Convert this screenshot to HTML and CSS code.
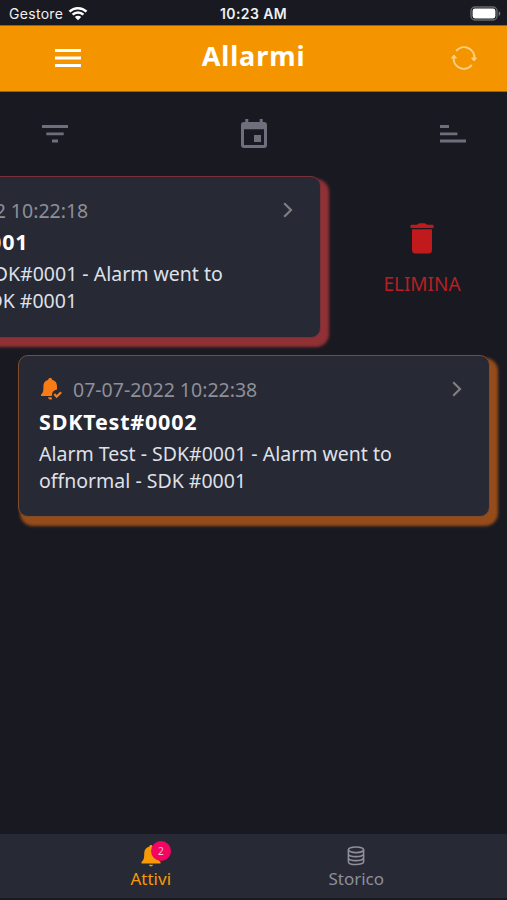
FILE: index.html
```
<!DOCTYPE html>
<html lang="it">
<head>
  <meta charset="UTF-8">
  <meta name="viewport" content="width=device-width, initial-scale=1.0">
  <title>Allarmi</title>
  <link rel="stylesheet" href="styles.css">
</head>
<body>
  <div class="status-bar">
    <div class="carrier">
      <span>Gestore</span>
      <svg class="wifi" width="20" height="15" viewBox="0 0 20 15">
        <path d="M1.5 5.6C6.2 1 13.8 1 18.5 5.6M4.6 8.7c3-2.9 7.8-2.9 10.8 0" fill="none" stroke="#fff" stroke-width="2.5"/>
        <path d="M10 14.2l-3.2-3.3c1.8-1.7 4.6-1.7 6.4 0z" fill="#fff"/>
      </svg>
    </div>
    <span class="clock">10:23 AM</span>
    <svg class="battery" width="31" height="15" viewBox="0 0 31 15">
      <rect x="1" y="1" width="26" height="13" rx="4" fill="#1a1b22" stroke="#66676c" stroke-width="1.4"/>
      <rect x="2.6" y="2.6" width="22.8" height="9.8" rx="2.4" fill="#fff"/>
      <path d="M28.7 5.2c2.2.9 2.2 3.7 0 4.6z" fill="#77787c"/>
    </svg>
  </div>

  <header class="header">
    <svg class="menu-icon" width="26" height="18" viewBox="0 0 26 18">
      <path d="M0 1.5h26M0 9h26M0 16.5h26" stroke="#fff" stroke-width="2.9"/>
    </svg>
    <h1>Allarmi</h1>
    <svg class="refresh-icon" width="28" height="24" viewBox="0 0 28 24">
      <g fill="none" stroke="#fbcf83" stroke-width="2">
        <path d="M6.2 5A10.2 10.2 0 0 1 24.2 13"/>
        <path d="M21.8 19A10.2 10.2 0 0 1 3.8 11"/>
      </g>
      <path d="M21.5 12h5L24 15zM1.5 12h5L4 9z" fill="#fbcf83" stroke="#fbcf83" stroke-linejoin="round"/>
    </svg>
  </header>

  <div class="toolbar">
    <svg width="26" height="18" viewBox="0 0 26 18">
      <path d="M0 1.5h26M4.3 8.8h17.4M10 16h6" stroke="#6d6f7c" stroke-width="2.8"/>
    </svg>
    <svg width="26" height="30" viewBox="0 0 26 30">
      <path fill-rule="evenodd" d="M4.3 0h3v3h11.4V0h3v3H23a3 3 0 0 1 3 3v20a3 3 0 0 1-3 3H3a3 3 0 0 1-3-3V6a3 3 0 0 1 3-3h1.3zM3 10.3V26h20V10.3z" fill="#6d6f7c"/>
      <rect x="13" y="16" width="7" height="7" fill="#6d6f7c"/>
    </svg>
    <svg width="26" height="18" viewBox="0 0 26 18">
      <path d="M0 1.5h9M0 8.8h17.4M0 16h26" stroke="#6d6f7c" stroke-width="2.8"/>
    </svg>
  </div>

  <main class="alarms">
    <div class="alarm-row swiped">
      <div class="alarm-card red">
        <div class="alarm-top">
          <svg class="alarm-bell" width="22" height="22" viewBox="0 0 22 22">
            <path d="M10 0c1 0 1.6.7 1.6 1.5C15 2.3 16.5 5 16.5 8v3c-3.5.5-5.5 3-5.3 7H1v-1.5c1.8-1.5 2.3-3 2.3-6V8C3.3 5 5 2.3 8.4 1.5 8.4.7 9 0 10 0z" fill="#c62828"/>
          </svg>
          <span class="date">07-07-2022 10:22:18</span>
          <svg class="chevron" width="10" height="16" viewBox="0 0 10 16">
            <path d="M1.2 1.2L8 8l-6.8 6.8" fill="none" stroke="#7f7f82" stroke-width="2.2"/>
          </svg>
        </div>
        <h2>SDKTest#0001</h2>
        <p>Alarm Test - SDK#0001 - Alarm went to offnormal - SDK #0001</p>
      </div>
      <div class="delete">
        <svg width="24" height="31" viewBox="0 0 24 31">
          <path d="M2 6.3h20V27a3.5 3.5 0 0 1-3.5 3.5h-13A3.5 3.5 0 0 1 2 27zM1.5 1.8h5.2Q8.5.3 9.5.3h5q1 0 2.8 1.5h5.2q1 0 1 1v2.200H.5V2.800q0-1 1-1z" fill="#c01a1d"/>
        </svg>
        <span>ELIMINA</span>
      </div>
    </div>

    <div class="alarm-row">
      <div class="alarm-card orange">
        <div class="alarm-top">
          <svg class="alarm-bell" width="22" height="22" viewBox="0 0 22 22">
            <path d="M9.2 0c1.2 0 1.9.7 1.9 1.7 3.3.9 4.9 3.3 4.9 6.3v3.4c-3.5.6-5.3 3-5.1 6.6H0v-1.6c1.8-1.4 2.4-3 2.4-6V8c0-3 1.6-5.4 4.9-6.3C7.3.7 8 0 9.2 0zM7 19.2h3.4l.8 1.7c-1.5 1.2-3.7.7-4.2-1.7z" fill="#f97b16"/>
            <path d="M13.2 16l2.4 2.6 4.6-4.4" fill="none" stroke="#f97b16" stroke-width="2.2"/>
          </svg>
          <span class="date">07-07-2022 10:22:38</span>
          <svg class="chevron" width="10" height="16" viewBox="0 0 10 16">
            <path d="M1.2 1.2L8 8l-6.8 6.8" fill="none" stroke="#7f7f82" stroke-width="2.2"/>
          </svg>
        </div>
        <h2>SDKTest#0002</h2>
        <p>Alarm Test - SDK#0001 - Alarm went to offnormal - SDK #0001</p>
      </div>
    </div>
  </main>

  <nav class="tabs">
    <a class="tab active">
      <span class="tab-icon">
        <svg width="20" height="22" viewBox="0 0 20 22">
          <path d="M10 0c1 0 1.6.7 1.6 1.5 3.4.8 5.2 3.5 5.2 7 0 5 .5 6.5 2.7 8.5v1.5H.5V17c2.2-2 2.7-3.5 2.7-8.500 0-3.500 1.800-6.200 5.200-7C8.400.7 9 0 10 0zM8 19.800h4c-.4 2.200-3.600 2.200-4 0z" fill="#f79a05"/>
        </svg>
        <span class="badge">2</span>
      </span>
      <span>Attivi</span>
    </a>
    <a class="tab">
      <span class="tab-icon">
        <svg width="18" height="20" viewBox="0 0 18 20">
          <g fill="none" stroke="#8d8f99" stroke-width="1.6">
            <ellipse cx="9" cy="3.8" rx="7.6" ry="2.8"/>
            <path d="M1.4 3.8v11.9c0 3.800 15.200 3.800 15.200 0V3.800M1.400 7.800c0 3.800 15.200 3.800 15.200 0M1.400 11.800c0 3.800 15.200 3.800 15.200 0"/>
          </g>
        </svg>
      </span>
      <span>Storico</span>
    </a>
  </nav>
</body>
</html>
```
FILE: styles.css
```
* {
  box-sizing: border-box;
}

body {
  font-family: "Noto Sans", sans-serif;
  background-color: #191a21;
  margin: 0;
  height: 900px;
  display: flex;
  flex-direction: column;
  overflow: hidden;
}

h1, h2, p {
  margin: 0;
}

svg {
  display: block;
}

/* Status bar */
.status-bar {
  display: grid;
  grid-template-columns: 1fr auto 1fr;
  align-items: center;
  height: 25px;
  padding: 2px 6px 0;
  color: #f0f0f2;
  font-family: Inter, sans-serif;
  font-size: 14px;
}

.carrier {
  display: flex;
  align-items: center;
  gap: 5px;
  padding-left: 3px;
  letter-spacing: 0.3px;
}

.clock {
  font-weight: 600;
  letter-spacing: 0.4px;
}

.battery {
  justify-self: end;
}

/* Header */
.header {
  display: flex;
  align-items: center;
  justify-content: space-between;
  height: 67px;
  padding: 0 29px 1px 55px;
  background: #f49500;
  border-top: 1px solid #9b6412;
  border-bottom: 1px solid #9b6412;
}

.header h1 {
  color: #ffffff;
  font-size: 27px;
  line-height: 38px;
  letter-spacing: 0.9px;
  margin-bottom: 5px;
  margin-right: 24px;
}

/* Filters */
.toolbar {
  display: flex;
  align-items: center;
  justify-content: space-between;
  height: 84px;
  padding: 0 41px 0 42px;
}

/* Alarm list */
.alarms {
  flex: 1;
  display: flex;
  flex-direction: column;
  gap: 17px;
}

.alarm-row {
  display: flex;
  padding-left: 18px;
}

.alarm-row.swiped {
  margin-left: -169px;
}

.alarm-card {
  flex: none;
  width: 472px;
  height: 162px;
  padding: 19px 20px;
  background: #272935;
  border: 1px solid;
  border-radius: 10px;
}

.alarm-card.red {
  border-color: #7a3038;
  box-shadow: 5px 6px 3px 3px #913136;
}

.alarm-card.red h2 {
  line-height: 36px;
}

.alarm-card.orange {
  border-color: #824b29;
  box-shadow: 5px 6px 3px 3px #964c1a;
}

.alarm-top {
  display: flex;
  align-items: center;
  height: 28px;
  padding-left: 2px;
}

.date {
  color: #8e8f99;
  font-size: 19.5px;
  margin-left: 10px;
}

.chevron {
  margin-left: auto;
  margin-right: 7px;
}

.alarm-card h2 {
  color: #ffffff;
  font-size: 21.5px;
  line-height: 37px;
  letter-spacing: 0.8px;
}

.alarm-card p {
  color: #dfe0e8;
  font-size: 19.5px;
  line-height: 27px;
}

.delete {
  flex: 1;
  display: flex;
  flex-direction: column;
  align-items: center;
  gap: 17px;
  padding-top: 47px;
  padding-left: 16px;
  color: #b52024;
  font-size: 19px;
  line-height: 27px;
}

/* Bottom tabs */
.tabs {
  display: flex;
  justify-content: space-around;
  height: 66px;
  padding: 0 48px;
  background: #272935;
  border-bottom: 2px solid #191a21;
}

.tab {
  display: flex;
  flex-direction: column;
  align-items: center;
  width: 100px;
  padding-top: 11px;
  color: #8d8f99;
  font-size: 17px;
  line-height: 24px;
}

.tab.active {
  color: #f79a05;
}

.tab-icon {
  position: relative;
  display: flex;
  align-items: center;
  height: 22px;
}

.badge {
  position: absolute;
  top: -4px;
  left: 10px;
  width: 20px;
  height: 20px;
  border-radius: 50%;
  background: #f50562;
  color: #ffc4da;
  font-size: 10px;
  line-height: 20px;
  text-align: center;
}
```
